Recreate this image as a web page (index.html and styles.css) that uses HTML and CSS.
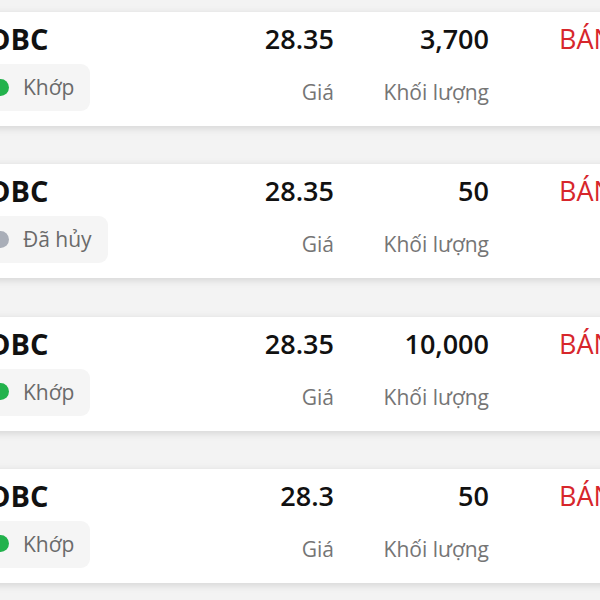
FILE: index.html
```html
<!DOCTYPE html>
<html lang="vi">
<head>
<meta charset="utf-8">
<link rel="stylesheet" href="styles.css">
</head>
<body>
<div class="list">
  <div class="card">
    <div class="left">
      <div class="ticker">DBC</div>
      <div class="pill"><span class="dot dot-green"></span><span class="status">Khớp</span></div>
    </div>
    <div class="col col-price"><div class="num">28.35</div><div class="label">Giá</div></div>
    <div class="col col-vol"><div class="num">3,700</div><div class="label">Khối lượng</div></div>
    <div class="side">BÁN</div>
  </div>
  <div class="card">
    <div class="left">
      <div class="ticker">DBC</div>
      <div class="pill"><span class="dot dot-gray"></span><span class="status">Đã hủy</span></div>
    </div>
    <div class="col col-price"><div class="num">28.35</div><div class="label">Giá</div></div>
    <div class="col col-vol"><div class="num">50</div><div class="label">Khối lượng</div></div>
    <div class="side">BÁN</div>
  </div>
  <div class="card">
    <div class="left">
      <div class="ticker">DBC</div>
      <div class="pill"><span class="dot dot-green"></span><span class="status">Khớp</span></div>
    </div>
    <div class="col col-price"><div class="num">28.35</div><div class="label">Giá</div></div>
    <div class="col col-vol"><div class="num">10,000</div><div class="label">Khối lượng</div></div>
    <div class="side">BÁN</div>
  </div>
  <div class="card">
    <div class="left">
      <div class="ticker">DBC</div>
      <div class="pill"><span class="dot dot-green"></span><span class="status">Khớp</span></div>
    </div>
    <div class="col col-price"><div class="num">28.3</div><div class="label">Giá</div></div>
    <div class="col col-vol"><div class="num">50</div><div class="label">Khối lượng</div></div>
    <div class="side">BÁN</div>
  </div>
</div>
</body>
</html>
```

FILE: styles.css
```css
html, body {
  margin: 0;
  padding: 0;
}
body {
  background: #f3f3f3;
  font-family: "Open Sans", "Noto Sans", sans-serif;
  overflow: hidden;
  width: 600px;
  height: 600px;
}
.list {
  display: flex;
  flex-direction: column;
  gap: 38.33px;
  padding-top: 12px;
  margin-left: -30px;
  width: 700px;
}
.card {
  display: flex;
  align-items: flex-start;
  height: 114px;
  box-sizing: border-box;
  padding: 10px 0 15px 12px;
  background: #ffffff;
  box-shadow: 0 2px 8px rgba(0, 0, 0, 0.13);
}
.left {
  width: 232px;
  display: flex;
  flex-direction: column;
  align-items: flex-start;
}
.ticker {
  font-size: 29px;
  line-height: 34px;
  font-weight: 700;
  color: #111;
  margin-left: 7px;
}
.pill {
  margin-top: 8px;
  display: flex;
  align-items: center;
  gap: 14px;
  padding: 9px 16px 10px 10px;
  background: #f5f5f5;
  border-radius: 9px;
}
.dot {
  width: 17px;
  height: 17px;
  border-radius: 50%;
}
.dot-green { background: #22b24c; }
.dot-gray { background: #a9aeb8; }
.status {
  font-size: 21px;
  line-height: 28px;
  color: #6a6a6a;
}
.col {
  display: flex;
  flex-direction: column;
  align-items: flex-end;
}
.col-price { width: 120px; }
.col-vol { width: 155px; }
.num {
  font-size: 27px;
  line-height: 34px;
  font-weight: 600;
  color: #111;
}
.label {
  margin-top: 22px;
  font-size: 21px;
  line-height: 28px;
  color: #757575;
}
.side {
  margin-left: 70px;
  font-size: 27px;
  line-height: 34px;
  color: #d7262b;
}
```
